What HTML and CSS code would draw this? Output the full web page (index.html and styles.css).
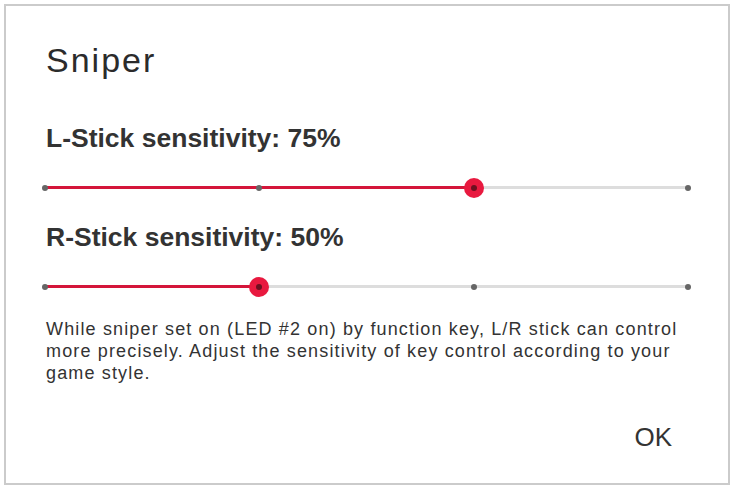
FILE: index.html
```html
<!DOCTYPE html>
<html>
<head>
<meta charset="utf-8">
<link rel="stylesheet" href="styles.css">
</head>
<body>
<div class="dialog">
  <h1 class="title">Sniper</h1>
  <h2 class="label">L-Stick sensitivity: 75%</h2>
  <div class="slider">
    <div class="fill" style="width: 66.667%"></div>
    <span class="tick" style="left: 0%"></span>
    <span class="tick" style="left: 33.333%"></span>
    <span class="tick" style="left: 66.667%"></span>
    <span class="tick" style="left: 100%"></span>
    <span class="thumb" style="left: 66.667%"></span>
  </div>
  <h2 class="label">R-Stick sensitivity: 50%</h2>
  <div class="slider">
    <div class="fill" style="width: 33.333%"></div>
    <span class="tick" style="left: 0%"></span>
    <span class="tick" style="left: 33.333%"></span>
    <span class="tick" style="left: 66.667%"></span>
    <span class="tick" style="left: 100%"></span>
    <span class="thumb" style="left: 33.333%"></span>
  </div>
  <p class="desc">While sniper set on (LED #2 on) by function key, L/R stick can control more precisely. Adjust the sensitivity of key control according to your game style.</p>
  <div class="actions"><button class="ok">OK</button></div>
</div>
</body>
</html>
```
FILE: styles.css
```css
* { box-sizing: border-box; }
html, body { margin: 0; padding: 0; background: #fff; }
body {
  width: 734px;
  height: 490px;
  padding: 4px 4px 5px 4px;
  font-family: "Liberation Sans", Arial, sans-serif;
  color: #333;
}
.dialog {
  width: 726px;
  height: 481px;
  border: 2px solid #cbcbcb;
  padding: 0 40px 0 40px;
  display: flex;
  flex-direction: column;
}
.title {
  margin: 35px 0 0 0;
  font-size: 34px;
  font-weight: normal;
  letter-spacing: 2px;
  line-height: 38px;
  color: #2b2b2b;
}
.label {
  margin: 33px 0 0 0;
  font-size: 26.5px;
  font-weight: bold;
  line-height: 30px;
  color: #333;
}
.title + .label { margin-top: 44px; }
.slider {
  position: relative;
  height: 3px;
  margin: 33px 0 0 -1px;
  width: 643px;
  flex: none;
  background: #dddddd;
}
.fill {
  height: 3px;
  background: #d4163a;
}
.tick {
  position: absolute;
  top: 50%;
  width: 6px;
  height: 6px;
  margin: -3px 0 0 -3px;
  border-radius: 50%;
  background: #666;
}
.thumb {
  position: absolute;
  top: 50%;
  width: 20px;
  height: 20px;
  margin: -10px 0 0 -10px;
  border-radius: 50%;
  background: #e8193f;
  display: flex;
  align-items: center;
  justify-content: center;
}
.thumb::after {
  content: "";
  width: 6px;
  height: 6px;
  border-radius: 50%;
  background: #6d1020;
}
.desc {
  margin: 30px 0 0 0;
  font-size: 18px;
  letter-spacing: 1.15px;
  line-height: 22px;
  color: #333;
}
.actions {
  display: flex;
  justify-content: flex-end;
  margin-top: 38px;
}
.ok {
  display: block;
  background: none;
  border: none;
  padding: 0;
  margin-right: 16px;
  font-family: inherit;
  font-size: 26px;
  line-height: 30px;
  color: #333;
}
```
